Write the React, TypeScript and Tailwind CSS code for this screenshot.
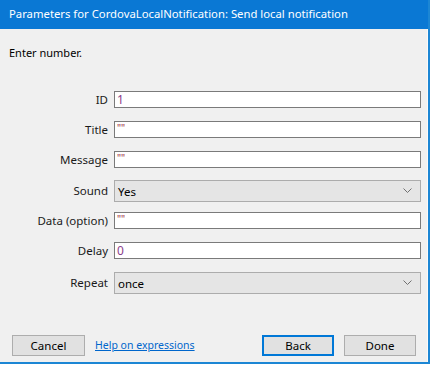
import React from 'react';

const font = { fontFamily: '"Noto Sans", "Open Sans", Arial, sans-serif' };

type Field = { label: string; value: string; kind: 'num' | 'str' | 'select'; mt: string };

const fields: Field[] = [
  { label: 'ID', value: '1', kind: 'num', mt: 'mt-0' },
  { label: 'Title', value: '""', kind: 'str', mt: 'mt-[13px]' },
  { label: 'Message', value: '""', kind: 'str', mt: 'mt-[13px]' },
  { label: 'Sound', value: 'Yes', kind: 'select', mt: 'mt-[12px]' },
  { label: 'Data (option)', value: '""', kind: 'str', mt: 'mt-[10px]' },
  { label: 'Delay', value: '0', kind: 'num', mt: 'mt-[13px]' },
  { label: 'Repeat', value: 'once', kind: 'select', mt: 'mt-[13px]' },
];

function Chevron() {
  return (
    <svg width="9" height="6" viewBox="0 0 9 6" className="text-[#707070]">
      <polyline points="0.5,0.5 4.5,4.5 8.5,0.5" fill="none" stroke="currentColor" strokeWidth="1" />
    </svg>
  );
}

function Row({ f }: { f: Field }) {
  return (
    <div className={`flex items-center ${f.mt}`}>
      <div className="w-[108px] text-right text-[11.5px] text-[#1a1a1a] leading-none">{f.label}</div>
      <div className="ml-[6px] w-[307px]">
        {f.kind === 'select' ? (
          <div className="h-[22px] border border-[#acacac] bg-[#e5e5e5] flex items-center pl-[3px] pr-[8px] text-[11.5px] text-black">
            <span className="flex-1 pt-[2px]">{f.value}</span>
            <Chevron />
          </div>
        ) : (
          <div className="h-[17px] border border-[#7a7a7a] bg-white flex items-center pl-[2px] text-[12px] leading-none">
            <span className={f.kind === 'num' ? 'text-[#8a3d8a]' : 'text-[#9a3040] text-[10px] -mt-[4px]'}>{f.value}</span>
          </div>
        )}
      </div>
    </div>
  );
}

export default function App() {
  return (
    <div style={font} className="w-[432px] h-[366px] flex flex-col bg-white select-none">
      <div className="w-[430px] h-[364px] flex flex-col border-r-2 border-b-2 border-[#1c86d4]">
        {/* Title bar */}
        <div className="h-[29px] bg-[#0a78d4] flex items-center pl-[9px] text-white text-[11.3px]">
          Parameters for CordovaLocalNotification: Send local notification
        </div>

        <div className="flex-1 bg-[#f0f0f0] border-r border-[#fafafa] flex flex-col">
          <div className="pt-[16px] pl-[9px] text-[11px] text-black leading-[16px]">Enter number.</div>

          {/* Fields */}
          <div className="mt-[30px] flex flex-col">
            {fields.map((f) => (
              <Row key={f.label} f={f} />
            ))}
          </div>

          {/* Footer */}
          <div className="mt-auto mb-[6px] flex items-center pl-[12px] pr-[11px]">
            <button className="w-[73px] h-[21px] border border-[#adadad] bg-[#e1e1e1] text-[11.5px] text-black">Cancel</button>
            <a className="ml-[10px] text-[10.5px] text-[#0066cc] underline">Help on expressions</a>
            <button className="ml-auto w-[72px] h-[21px] border-2 border-[#0078d7] bg-[#e1e1e1] text-[11.5px] text-black">Back</button>
            <button className="ml-[10px] w-[72px] h-[21px] border border-[#adadad] bg-[#e1e1e1] text-[11.5px] text-black">Done</button>
          </div>
        </div>
      </div>
    </div>
  );
}
